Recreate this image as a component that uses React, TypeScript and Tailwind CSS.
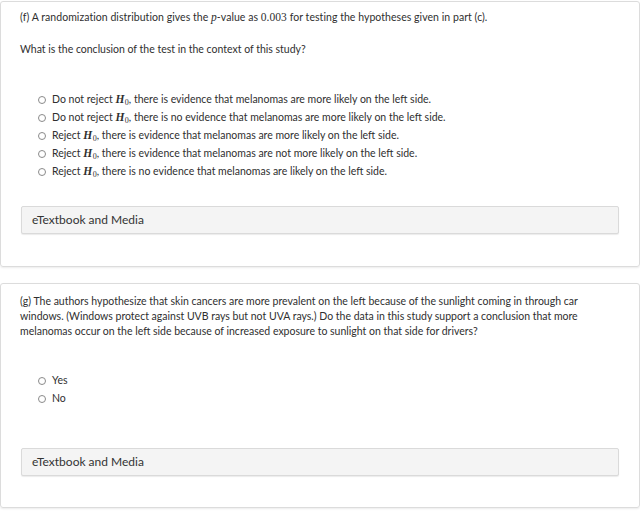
import React from 'react';

const serif = { fontFamily: '"Liberation Serif", "DejaVu Serif", serif' };

const M = ({ children, italic = true }: { children: React.ReactNode; italic?: boolean }) => (
  <span className={`${italic ? 'italic' : ''} text-[11.5px]`} style={serif}>
    {children}
  </span>
);

const H0 = () => (
  <span className="italic text-[11.5px] font-semibold" style={serif}>
    H<span className="not-italic font-normal text-[8px] align-[-2px] ml-[0.5px]">0</span>
  </span>
);

function Radio({ children }: { children: React.ReactNode }) {
  return (
    <div className="flex items-center h-[18px]">
      <span className="w-[8px] h-[8px] rounded-full border border-[#8a8a8a] bg-white mr-[6px] shrink-0" />
      <span className="whitespace-nowrap">{children}</span>
    </div>
  );
}

function Media() {
  return (
    <div className="h-[28px] mx-[20px] bg-[#f4f4f4] border border-[#dadada] rounded-[2px] shadow-[0_1px_1px_rgba(0,0,0,0.08)] flex items-center pl-[10px] text-[12px] text-[#333]">
      eTextbook and Media
    </div>
  );
}

export default function App() {
  return (
    <div
      className="w-[640px] h-[511px] bg-white text-[10.5px] text-[#2f2f2f] overflow-hidden pt-[1px]"
      style={{ fontFamily: 'Lato, "Liberation Sans", sans-serif' }}
    >
      <div className="h-[266px] border border-[#dcdcdc] rounded-[3px] shadow-[0_1px_2px_rgba(0,0,0,0.08)] pt-[7px]">
        <div className="pl-[19px] leading-[16px] whitespace-nowrap tracking-[0.05px]">
          (f) A randomization distribution gives the <M>p</M>-value as <M italic={false}>0.003</M> for testing the
          hypotheses given in part (c).
        </div>
        <div className="pl-[19px] leading-[16px] mt-[16px]">
          What is the conclusion of the test in the context of this study?
        </div>
        <div className="pl-[37px] mt-[34px]">
          <Radio>Do not reject <H0 />, there is evidence that melanomas are more likely on the left side.</Radio>
          <Radio>Do not reject <H0 />, there is no evidence that melanomas are more likely on the left side.</Radio>
          <Radio>Reject <H0 />, there is evidence that melanomas are more likely on the left side.</Radio>
          <Radio>Reject <H0 />, there is evidence that melanomas are not more likely on the left side.</Radio>
          <Radio>Reject <H0 />, there is no evidence that melanomas are likely on the left side.</Radio>
        </div>
        <div className="mt-[25px]">
          <Media />
        </div>
      </div>

      <div className="mt-[16px] h-[225px] border border-[#dcdcdc] rounded-[3px] shadow-[0_1px_2px_rgba(0,0,0,0.08)] pt-[10px]">
        <div className="pl-[19px] leading-[15px] whitespace-nowrap">
          (g) The authors hypothesize that skin cancers are more prevalent on the left because of the sunlight coming in through car
          <br />
          windows. (Windows protect against UVB rays but not UVA rays.) Do the data in this study support a conclusion that more
          <br />
          melanomas occur on the left side because of increased exposure to sunlight on that side for drivers?
        </div>
        <div className="pl-[37px] mt-[33px]">
          <Radio>Yes</Radio>
          <Radio>No</Radio>
        </div>
        <div className="mt-[40px]">
          <Media />
        </div>
      </div>
    </div>
  );
}
